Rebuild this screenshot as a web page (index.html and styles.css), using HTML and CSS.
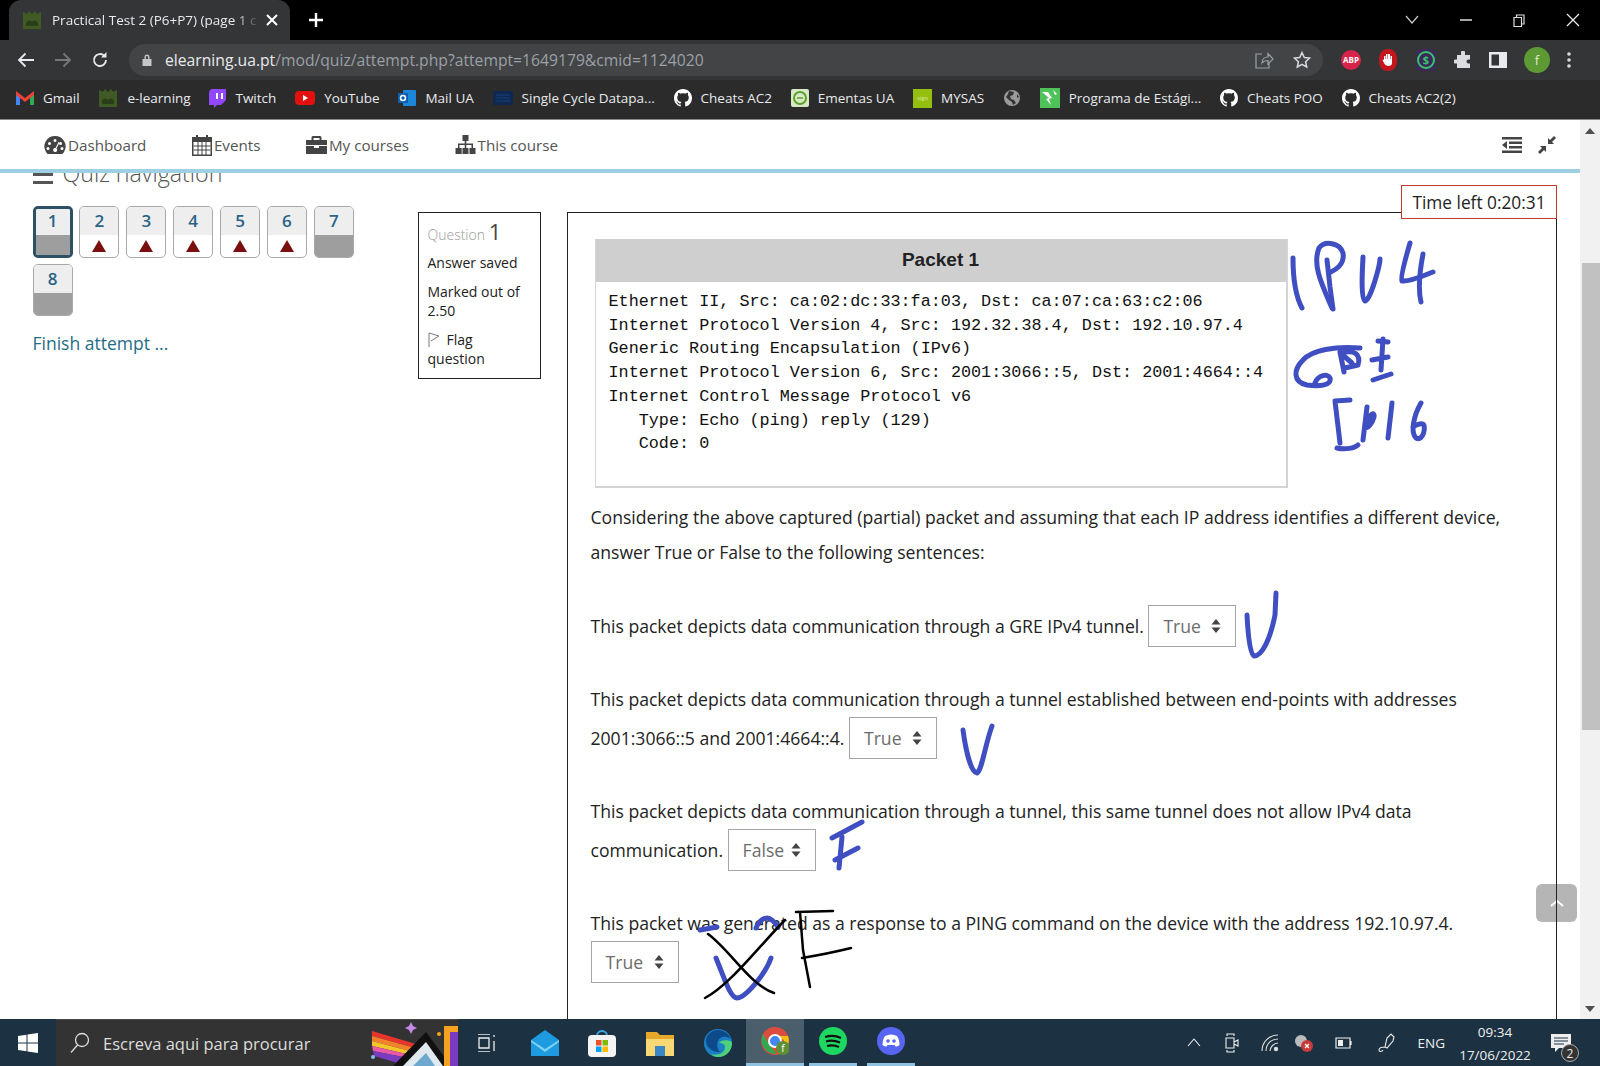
FILE: index.html
```html
<!DOCTYPE html>
<html lang="pt">
<head>
    <meta charset="UTF-8">
    <title>Practical Test 2 (P6+P7)</title>
    <link rel="stylesheet" href="styles.css">
</head>
<body>
<svg class="iconDefs" width="0" height="0">
    <symbol id="github" viewBox="0 0 16 16"><path fill="#fff" d="M8 0C3.58 0 0 3.58 0 8c0 3.54 2.29 6.53 5.47 7.59.4.07.55-.17.55-.38 0-.19-.01-.82-.01-1.49-2.01.37-2.53-.49-2.69-.94-.09-.23-.48-.94-.82-1.13-.28-.15-.68-.52-.01-.53.63-.01 1.08.58 1.23.82.72 1.21 1.87.87 2.33.66.07-.52.28-.87.51-1.07-1.78-.2-3.64-.89-3.64-3.95 0-.87.31-1.59.82-2.15-.08-.2-.36-1.02.08-2.12 0 0 .67-.21 2.2.82.64-.18 1.32-.27 2-.27.68 0 1.36.09 2 .27 1.53-1.04 2.2-.82 2.2-.82.44 1.1.16 1.92.08 2.12.51.56.82 1.27.82 2.15 0 3.07-1.87 3.75-3.65 3.95.29.25.54.73.54 1.48 0 1.07-.01 1.93-.01 2.2 0 .21.15.46.55.38A8.013 8.013 0 0016 8c0-4.42-3.58-8-8-8z"/></symbol>
    <symbol id="moodle" viewBox="0 0 20 20"><path fill="#3f5a24" d="M1 2l4 2 2-3 3 3 3-3 2 3 4-2v17H1z"/><path fill="#2a3d18" d="M4 13c2-3 4-3 6-1 2-2 4-2 6 1v3H4z"/></symbol>
    <symbol id="updown" viewBox="0 0 10 14"><path fill="#444" d="M5 0l4.5 5.5h-9zM5 14L.5 8.500h9z"/></symbol>
    <symbol id="warn" viewBox="0 0 14 12"><path fill="#7b0f0f" d="M7 0l7 12H0z"/></symbol>
</svg>

<div class="tabStrip">
    <div class="tab">
        <svg class="favicon" width="20" height="20"><use href="#moodle"/></svg>
        <span class="tabTitle">Practical Test 2 (P6+P7) (page 1 c</span>
        <svg class="tabClose" width="12" height="12" viewBox="0 0 12 12"><path d="M1 1l10 10M11 1L1 11" stroke="#fff" stroke-width="2"/></svg>
    </div>
    <svg class="newTab" width="16" height="16" viewBox="0 0 16 16"><path d="M8 1v14M1 8h14" stroke="#fff" stroke-width="2.400"/></svg>
    <div class="windowBtns">
        <svg width="14" height="10" viewBox="0 0 14 10"><path d="M1 1l6 7 6-7" fill="none" stroke="#ccc" stroke-width="1.200"/></svg>
        <svg width="12" height="2" viewBox="0 0 12 2"><path d="M0 1h12" stroke="#ddd" stroke-width="1.500"/></svg>
        <svg width="12" height="13" viewBox="0 0 12 13"><path d="M1 3.500h7.500v9H1zM3.500 3.500V1H11v9H8.500" fill="none" stroke="#ddd" stroke-width="1.200"/></svg>
        <svg width="14" height="14" viewBox="0 0 14 14"><path d="M1 1l12 12M13 1L1 13" stroke="#eee" stroke-width="1.200"/></svg>
    </div>
</div>

<div class="toolBar">
    <svg class="navBtn" width="18" height="16" viewBox="0 0 18 16"><path d="M17 8H2M8.500 1.500L2 8l6.500 6.500" fill="none" stroke="#e8eaed" stroke-width="1.800"/></svg>
    <svg class="navBtn" width="18" height="16" viewBox="0 0 18 16"><path d="M1 8h15M9.500 1.500L16 8l-6.500 6.500" fill="none" stroke="#777" stroke-width="1.800"/></svg>
    <svg class="navBtn" width="18" height="18" viewBox="0 0 18 18"><path d="M15 9a6 6 0 1 1-1.800-4.300" fill="none" stroke="#e8eaed" stroke-width="1.800"/><path d="M15.500 1v5.500H10z" fill="#e8eaed"/></svg>
    <div class="urlBar">
        <svg width="12" height="14" viewBox="0 0 12 14"><path fill="#c4c7c5" d="M1.500 6h9v7h-9zM3.500 6V4a2.500 2.500 0 0 1 5 0v2h-1.400V4a1.100 1.100 0 0 0-2.200 0v2z"/></svg>
        <span class="urlText"><b>elearning.ua.pt</b>/mod/quiz/attempt.php?attempt=1649179&amp;cmid=1124020</span>
        <svg class="urlIcon" width="20" height="18" viewBox="0 0 20 18"><path d="M8 3H2v14h13v-5M8 12c0-4 3-6 6-6V2.500L19 8l-5 5V9.500c-3 0-5 1-6 2.500z" fill="none" stroke="#9aa0a6" stroke-width="1.200"/></svg>
        <svg class="urlIcon" width="18" height="18" viewBox="0 0 18 18"><path d="M9 1.500l2.300 5 5.300.6-4 3.600 1.100 5.300L9 13.300 4.300 16l1.100-5.300-4-3.600 5.300-.6z" fill="none" stroke="#dadce0" stroke-width="1.500"/></svg>
    </div>
    <div class="extensions">
        <span class="extAbp">ABP</span>
        <svg width="20" height="22" viewBox="0 0 20 22"><path fill="#c5161d" d="M10 0c6 0 9 4 9 11s-3 11-9 11-9-4-9-11 3-11 9-11z"/><path fill="#fff" d="M6 11V7h1.500v3h.5V5h1.500v5h.5V5H12v5h.5V7H14v7c0 2-1.500 3-3.500 3S7 16 6 14l-1.500-3 1-.5z"/></svg>
        <svg width="22" height="24" viewBox="0 0 22 24"><rect x="1" y="1" width="20" height="22" rx="5" fill="#3b2a59"/><circle cx="11" cy="12" r="8" fill="none" stroke="#3ac26b" stroke-width="2"/><text class="extDollar" x="11" y="16" text-anchor="middle">$</text></svg>
        <svg width="18" height="18" viewBox="0 0 18 18"><path fill="#dadce0" d="M7 1.500a2 2 0 0 1 4 0V4h5v4.500h-1.500a2 2 0 0 0 0 4H16V17H3v-4.500H1.500a2 2 0 0 1 0-4H3V4h4z"/></svg>
        <svg width="18" height="18" viewBox="0 0 18 18"><path fill-rule="evenodd" fill="#e8eaed" d="M0 1h18v16H0zM2.500 3.500v11H10v-11z"/></svg>
        <span class="avatar">f</span>
        <svg width="4" height="16" viewBox="0 0 4 16"><circle cx="2" cy="2" r="1.800" fill="#dadce0"/><circle cx="2" cy="8" r="1.800" fill="#dadce0"/><circle cx="2" cy="14" r="1.800" fill="#dadce0"/></svg>
    </div>
</div>

<div class="bookmarks">
    <div class="bookmark"><svg width="18" height="14" viewBox="0 0 18 14"><path fill="#4285f4" d="M0 2v12h4V6z"/><path fill="#34a853" d="M18 2v12h-4V6z"/><path fill="#ea4335" d="M0 0l9 7 9-7v4L9 11 0 4z"/></svg>Gmail</div>
    <div class="bookmark"><svg width="20" height="20"><use href="#moodle"/></svg>e-learning</div>
    <div class="bookmark"><svg width="17" height="19" viewBox="0 0 17 19"><path fill="#9146ff" d="M2 0h15v11l-5 5H8l-3 3v-3H0V3z"/><path fill="#fff" d="M7 4h2v6H7zM12 4h2v6h-2z"/></svg>Twitch</div>
    <div class="bookmark"><svg width="20" height="14" viewBox="0 0 20 14"><rect width="20" height="14" rx="4" fill="#e3100f"/><path fill="#fff" d="M8 4l5 3-5 3z"/></svg>YouTube</div>
    <div class="bookmark"><svg width="18" height="18" viewBox="0 0 18 18"><rect x="5" y="1" width="13" height="16" rx="1" fill="#1c86d8"/><rect y="4" width="10" height="10" fill="#0b5fb3"/><circle cx="5" cy="9" r="2.500" fill="none" stroke="#fff" stroke-width="1.500"/></svg>Mail UA</div>
    <div class="bookmark"><svg width="20" height="14" viewBox="0 0 20 14"><rect width="20" height="14" fill="#10284f"/><path d="M3 4h14M3 7h14M3 10h14" stroke="#17407e"/></svg>Single Cycle Datapa...</div>
    <div class="bookmark"><svg width="18" height="18"><use href="#github"/></svg>Cheats AC2</div>
    <div class="bookmark"><svg width="18" height="18" viewBox="0 0 18 18"><rect width="18" height="18" rx="2" fill="#d9e8c8"/><circle cx="9" cy="9" r="6" fill="none" stroke="#5da32b" stroke-width="2"/><path d="M6 9h6" stroke="#5da32b" stroke-width="1.500"/></svg>Ementas UA</div>
    <div class="bookmark"><span class="mysasIcon">sigo</span>MYSAS</div>
    <div class="bookmark"><svg width="18" height="18" viewBox="0 0 18 18"><circle cx="9" cy="9" r="8" fill="#9a9a9a"/><path fill="#333" d="M6 2l5 1-1 3-3 1 1 3 3 1 2 3-3 2-1-3-3-2-3-3 2-3zM14 5l2 3-2 1z"/></svg></div>
    <div class="bookmark"><svg width="20" height="20" viewBox="0 0 20 20"><rect width="20" height="20" fill="#4fc25a"/><path fill="#fff" d="M2 4l7 6-3 1 5 6-2-6 3-1-4-6zM13 2l4 4-2 1z"/></svg>Programa de Estági...</div>
    <div class="bookmark"><svg width="18" height="18"><use href="#github"/></svg>Cheats POO</div>
    <div class="bookmark"><svg width="18" height="18"><use href="#github"/></svg>Cheats AC2(2)</div>
</div>

<div class="pageArea">
    <div class="pageColumn">
        <div class="navBar">
            <div class="navItem">
                <svg width="22" height="20" viewBox="0 0 22 20"><path fill="#444" fill-rule="evenodd" d="M11 1a10.500 10.500 0 0 0-9 16l1.500 2h15l1.500-2A10.500 10.500 0 0 0 11 1zM11 4a1.500 1.500 0 1 1 0 3 1.500 1.500 0 0 1 0-3zM5.500 7a1.500 1.500 0 1 1 0 3 1.500 1.500 0 0 1 0-3zM16.500 7a1.500 1.500 0 1 1 0 3 1.500 1.500 0 0 1 0-3zM4 12a1.500 1.500 0 1 1 0 3 1.500 1.500 0 0 1 0-3zM18 12a1.500 1.500 0 1 1 0 3 1.500 1.500 0 0 1 0-3zM14.500 7l1 .5-3 6a2 2 0 1 1-1-.5z"/></svg>
                Dashboard
            </div>
            <div class="navItem">
                <svg width="20" height="22" viewBox="0 0 20 22"><path fill="#444" fill-rule="evenodd" d="M0 3h4V1h2v2h8V1h2v2h4v19H0zM1.500 8v12.500h17V8z"/><path d="M1.500 12h17M1.500 16h17M6 8v13M10 8v13M14 8v13" stroke="#444"/></svg>
                Events
            </div>
            <div class="navItem">
                <svg width="21" height="18" viewBox="0 0 21 18"><path fill="#444" d="M7 0h7a1.500 1.500 0 0 1 1.500 1.500V4H21v5H0V4h5.500V1.500A1.500 1.500 0 0 1 7 0zm.500 2v2h6V2zM0 10h8v2h5v-2h8v8H0z"/></svg>
                My courses
            </div>
            <div class="navItem">
                <svg width="21" height="19" viewBox="0 0 21 19"><path fill="#444" d="M7.500 0h6v6h-2.200v2.500H18V13h2.500v6h-6v-6H16.500v-3h-5.200v3h2.200v6h-6v-6h2.200v-3H4.500v3h2.200v6H.5v-6H3V8.500h6.700V6H7.500z"/></svg>
                This course
            </div>
            <div class="navTools">
                <svg width="20" height="16" viewBox="0 0 20 16"><path fill="#444" d="M0 0h20v2.500H0zM7 4.500h13V7H7zM7 9h13v2.500H7zM0 13.500h20V16H0zM5 4v8L0 8z"/></svg>
                <svg width="18" height="18" viewBox="0 0 18 18"><path fill="#444" d="M10 8V2l2 2 4-4 2 2-4 4 2 2zM8 10v6l-2-2-4 4-2-2 4-4-2-2z"/></svg>
            </div>
        </div>
        <div class="content">
            <div class="sideBlock">
                <div class="quizNavTitle"><span class="burger"></span>Quiz navigation</div>
                <div class="quizNavGrid">
                    <div class="qnBtn qnCurrent"><span class="qnNum">1</span><span class="qnMark qnGrey"></span></div>
                    <div class="qnBtn"><span class="qnNum">2</span><span class="qnMark"><svg width="14" height="12"><use href="#warn"/></svg></span></div>
                    <div class="qnBtn"><span class="qnNum">3</span><span class="qnMark"><svg width="14" height="12"><use href="#warn"/></svg></span></div>
                    <div class="qnBtn"><span class="qnNum">4</span><span class="qnMark"><svg width="14" height="12"><use href="#warn"/></svg></span></div>
                    <div class="qnBtn"><span class="qnNum">5</span><span class="qnMark"><svg width="14" height="12"><use href="#warn"/></svg></span></div>
                    <div class="qnBtn"><span class="qnNum">6</span><span class="qnMark"><svg width="14" height="12"><use href="#warn"/></svg></span></div>
                    <div class="qnBtn"><span class="qnNum">7</span><span class="qnMark qnGrey"></span></div>
                    <div class="qnBtn"><span class="qnNum">8</span><span class="qnMark qnGrey"></span></div>
                </div>
                <div class="finishLink">Finish attempt ...</div>
            </div>
            <div class="questionInfo">
                <div class="qiTitle">Question <b>1</b></div>
                <p>Answer saved</p>
                <p>Marked out of 2.50</p>
                <p><svg class="flagIcon" width="12" height="15" viewBox="0 0 12 15"><path d="M1 15V1l10 3-8 5" fill="none" stroke="#777"/></svg>Flag question</p>
            </div>
            <div class="questionBox">
                <div class="packetFigure">
                    <div class="packetHead">Packet 1</div>
                    <pre class="packetBody">Ethernet II, Src: ca:02:dc:33:fa:03, Dst: ca:07:ca:63:c2:06
Internet Protocol Version 4, Src: 192.32.38.4, Dst: 192.10.97.4
Generic Routing Encapsulation (IPv6)
Internet Protocol Version 6, Src: 2001:3066::5, Dst: 2001:4664::4
Internet Control Message Protocol v6
   Type: Echo (ping) reply (129)
   Code: 0</pre>
                </div>
                <p class="qText qFirst">Considering the above captured (partial) packet and assuming that each IP address identifies a different device, answer True or False to the following sentences:</p>
                <p class="qText">This packet depicts data communication through a GRE IPv4 tunnel. <span class="selectBox">True<svg width="10" height="14"><use href="#updown"/></svg></span></p>
                <p class="qText">This packet depicts data communication through a tunnel established between end-points with addresses 2001:3066::5 and 2001:4664::4. <span class="selectBox">True<svg width="10" height="14"><use href="#updown"/></svg></span></p>
                <p class="qText">This packet depicts data communication through a tunnel, this same tunnel does not allow IPv4 data communication. <span class="selectBox">False<svg width="10" height="14"><use href="#updown"/></svg></span></p>
                <p class="qText">This packet was generated as a response to a PING command on the device with the address 192.10.97.4. <span class="selectBox">True<svg width="10" height="14"><use href="#updown"/></svg></span></p>
            </div>
        </div>
        <div class="timeLeft">Time left 0:20:31</div>
        <div class="toTop"><svg width="14" height="8" viewBox="0 0 14 8"><path d="M1 7l6-5 6 5" fill="none" stroke="#fff" stroke-width="2"/></svg></div>
    </div>
    <div class="scrollBar">
        <svg width="10" height="6" viewBox="0 0 10 6"><path d="M5 0l5 6H0z" fill="#505050"/></svg>
        <div class="scrollThumb"></div>
        <svg width="10" height="6" viewBox="0 0 10 6"><path d="M5 6l5-6H0z" fill="#505050"/></svg>
    </div>
</div>

<div class="taskBar">
    <div class="startBtn"><svg width="20" height="20" viewBox="0 0 20 20"><path fill="#fff" d="M0 3l8.500-1.200V9.500H0zM9.500 1.600L20 0v9.500H9.500zM0 10.500h8.500v7.700L0 17zM9.500 10.500H20V20L9.500 18.400z"/></svg></div>
    <div class="searchBox">
        <svg width="20" height="22" viewBox="0 0 20 22"><circle cx="12" cy="8" r="6.500" fill="none" stroke="#ddd" stroke-width="1.300"/><path d="M7.500 13L1 20.500" stroke="#ddd" stroke-width="1.300"/></svg>
        <span class="searchText">Escreva aqui para procurar</span>
        <svg class="searchArt" width="90" height="46" viewBox="0 0 90 46">
            <path d="M4 11L58 27v4L4 16z" fill="#e8352b"/>
            <path d="M4 16L58 31l-1 4L4 21z" fill="#f4802b"/>
            <path d="M4 21L57 35l-1 3L4 26z" fill="#f6c52b"/>
            <path d="M4 26L56 38l-1 3L5 31z" fill="#e85aa8"/>
            <path d="M5 31L55 41l-2 5H40L6 36z" fill="#7a3bc0"/>
            <path d="M25 46L58 12l25 34z" fill="#111"/>
            <path d="M35 46l23-24 17 24z" fill="#dfe9ee"/>
            <path d="M45 46l13-13 9 13z" fill="#6fa8cf"/>
            <path d="M76 46V6h14v6H82v34z" fill="#f4a21f"/>
            <path d="M82 46V12h8v34z" fill="#7a3bc0"/>
            <path d="M43 2l2 4 4 2-4 2-2 4-2-4-4-2 4-2z" fill="#c58be8"/>
            <circle cx="71" cy="14" r="2" fill="#f4a21f"/>
            <circle cx="5" cy="37" r="2" fill="#7fc4e8"/>
        </svg>
    </div>
    <div class="taskCell"><svg width="20" height="18" viewBox="0 0 20 18"><path d="M1 0h12M1 18h12M2 4h10v10H2zM17 1v2M17 7v10" fill="none" stroke="#eee" stroke-width="1.300"/></svg></div>
    <div class="taskCell"><svg width="28" height="26" viewBox="0 0 28 26"><path fill="#1e9be0" d="M0 10L14 0l14 10v16H0z"/><path fill="#7fd0f5" d="M0 10l14 9 14-9v2L14 22 0 12z"/></svg></div>
    <div class="taskCell"><svg width="28" height="28" viewBox="0 0 28 28"><path d="M9 7a5 5 0 0 1 10 0" fill="none" stroke="#3da9dc" stroke-width="2"/><rect y="6" width="28" height="22" rx="4" fill="#f4f4f4"/><rect x="8" y="11" width="5.500" height="5.500" fill="#e8512b"/><rect x="14.500" y="11" width="5.500" height="5.500" fill="#7fba00"/><rect x="8" y="17.500" width="5.500" height="5.500" fill="#00a4ef"/><rect x="14.500" y="17.500" width="5.500" height="5.500" fill="#ffb900"/></svg></div>
    <div class="taskCell"><svg width="28" height="26" viewBox="0 0 28 26"><path fill="#e8a92a" d="M0 2h11l3 3h14v21H0z"/><path fill="#f8d775" d="M0 9h28v17H0z"/><rect x="9" y="16" width="10" height="10" fill="#3a87c8"/></svg></div>
    <div class="taskCell"><svg width="28" height="28" viewBox="0 0 28 28"><circle cx="14" cy="14" r="14" fill="#1a7fc4"/><path fill="#4fd17b" d="M28 14c0 8-6 14-14 14-3 0-5-1-7-3 5 2 14 0 14-7 0-2-2-4-6-4 3-4 13-3 13 0z"/><path fill="#0c4a8a" d="M2 10C4 4 9 1 14 1c6 0 11 4 13 9-4-3-9-3-12 0-3 4-2 10 1 13-7 1-15-5-14-13z"/></svg></div>
    <div class="taskCell taskActive"><svg width="28" height="28" viewBox="0 0 28 28"><circle cx="14" cy="14" r="14" fill="#dd4b3e"/><path fill="#f4c20d" d="M14 9h13a14 14 0 0 1-9 18l5-14z"/><path fill="#31a852" d="M2 7l8 13 6 7A14 14 0 0 1 2 7z"/><circle cx="14" cy="14" r="6" fill="#4285f4" stroke="#fff" stroke-width="2"/><circle cx="22" cy="21" r="7" fill="#5e8f35"/><text class="chromeBadge" x="22" y="25" text-anchor="middle">f</text></svg></div>
    <div class="taskCell taskOpen"><svg width="28" height="28" viewBox="0 0 28 28"><circle cx="14" cy="14" r="14" fill="#1ed760"/><path d="M6 10c6-2 11-1.500 16 1M7 14.500c5-1.500 9-1 14 1M8 19c4-1 8-.8 12 1" fill="none" stroke="#111" stroke-width="2.200"/></svg></div>
    <div class="taskCell taskOpen"><svg width="28" height="28" viewBox="0 0 28 28"><circle cx="14" cy="14" r="14" fill="#5865f2"/><path fill="#fff" d="M8 9c4-2 8-2 12 0 2 3 2.500 6 2.500 9-1.500 1-3 1.500-4 1.500l-1-1.500H10.500l-1 1.500c-1 0-2.500-.5-4-1.500 0-3 .5-6 2.500-9z"/><circle cx="11" cy="14" r="1.800" fill="#5865f2"/><circle cx="17" cy="14" r="1.800" fill="#5865f2"/></svg></div>
    <div class="tray">
        <svg width="14" height="9" viewBox="0 0 14 9"><path d="M1 8l6-7 6 7" fill="none" stroke="#eee" stroke-width="1.100"/></svg>
        <svg width="14" height="20" viewBox="0 0 14 20"><path d="M2 3V1h7v2M2 17v2h7v-2M1 5h8v10H1zM9 9l4-2v6l-4-2" fill="none" stroke="#eee" stroke-width="1.100"/></svg>
        <svg class="trayWifi" width="18" height="18" viewBox="0 0 18 18"><path d="M1 17C1 8 8 1 17 1M5 17C5 10 10 5 17 5M9 17c0-4 4-8 8-8" fill="none" stroke="#ddd" stroke-width="1.100"/><circle cx="15" cy="15" r="2.200" fill="#ddd"/></svg>
        <svg class="trayCloud" width="20" height="20" viewBox="0 0 20 20"><circle cx="7" cy="8" r="6" fill="#bbb"/><circle cx="13" cy="13" r="6" fill="#c83a3a"/><path d="M11 11l4 4M15 11l-4 4" stroke="#fff" stroke-width="1.200"/></svg>
        <svg class="trayBattery" width="18" height="12" viewBox="0 0 18 12"><path d="M1 1h14v10H1zM16 4v4" fill="none" stroke="#eee" stroke-width="1.200"/><rect x="3" y="3" width="5" height="6" fill="#eee"/></svg>
        <svg width="20" height="20" viewBox="0 0 20 20"><path d="M8 14l2-9 4-4 3 3-1 4-6 7zM8 14c-4 0-6 1-6 3s3 2 4 0" fill="none" stroke="#eee" stroke-width="1.100"/></svg>
        <span class="trayLang">ENG</span>
        <div class="trayClock">09:34<br>17/06/2022</div>
        <div class="trayNotif">
            <svg width="20" height="18" viewBox="0 0 20 18"><path fill="#eee" d="M0 0h20v14H8l-4 4v-4H0z"/><path d="M3 4h14M3 7h14M3 10h10" stroke="#1c3140"/></svg>
            <span class="notifCount">2</span>
        </div>
    </div>
</div>

<svg class="inkLayer" width="1600" height="1066" viewBox="0 0 1600 1066">
    <g class="inkBlue">
        <path d="M1293 258C1293 275 1295 295 1302 308"/>
        <path d="M1327 260L1330 287L1333 309"/>
        <path d="M1332 308C1322 285 1312 265 1319 248C1325 240 1340 243 1343 253C1345 265 1335 270 1329 273"/>
        <path d="M1363 257C1362 275 1361 298 1365 301C1370 302 1380 265 1380 259"/>
        <path d="M1410 243C1405 260 1400 278 1402 281C1410 282 1425 275 1433 272"/>
        <path d="M1423 254C1419 275 1418 290 1421 302"/>
        <path d="M1360 348C1335 346 1312 350 1303 360C1293 370 1293 382 1307 385C1320 387 1332 385 1330 378C1328 373 1318 375 1315 383"/>
        <path d="M1340 352L1344 372M1342 353C1355 349 1361 355 1358 365L1345 368M1345 357L1352 363"/>
        <path d="M1383 339L1381 370M1372 360L1388 357M1373 380L1391 374M1378 341L1388 342"/>
        <path d="M1350 400L1335 401L1340 443M1337 448C1345 450 1355 448 1358 445"/>
        <path d="M1367 407L1363 440M1366 425C1370 412 1375 412 1374 417C1372 424 1368 428 1365 428"/>
        <path d="M1392 403L1388 438"/>
        <path d="M1421 403C1414 415 1410 432 1416 438C1424 442 1426 425 1423 424C1420 423 1416 425 1413 427"/>
        <path d="M1247 615C1248 635 1250 655 1254 656C1262 656 1270 640 1275 615L1276 593"/>
        <path d="M963 730C965 745 970 772 977 773C982 770 985 745 992 726"/>
        <path d="M832 838L862 822M842 837L839 868M835 860L858 848"/>
        <path d="M716 958C725 980 730 997 737 998C745 998 765 975 771 958"/>
        <path d="M756 928C762 915 770 915 778 927M700 930L717 927"/>
    </g>
    <g class="inkBlack">
        <path d="M708 934C730 950 750 985 774 993"/>
        <path d="M705 998C730 985 760 945 785 920"/>
        <path d="M796 912L833 911M800 912L803 950L810 987"/>
        <path d="M802 958C820 955 835 952 851 948"/>
    </g>
</svg>
</body>
</html>
```
FILE: styles.css
```css
html,body{
    margin: 0;
    padding: 0;
    width: 1600px;
    height: 1066px;
    overflow: hidden;
    background: #fff;
    font-family: "Open Sans", "Liberation Sans", sans-serif;
}
body{
    display: flex;
    flex-direction: column;
    position: relative;
}
svg{
    flex: none;
}
.iconDefs{
    position: absolute;
}
p{
    margin: 0;
}

/* browser chrome */
.tabStrip{
    height: 40px;
    background: #000;
    display: flex;
    align-items: flex-end;
    padding-left: 9px;
}
.tab{
    width: 281px;
    height: 40px;
    box-sizing: border-box;
    background: #343537;
    border-radius: 12px 12px 0 0;
    display: flex;
    align-items: center;
    padding: 0 12px 0 13px;
    color: #e8eaed;
    font-size: 13.500px;
}
.tabTitle{
    flex: 1;
    margin-left: 10px;
    white-space: nowrap;
    -webkit-mask-image: linear-gradient(to right, #000 88%, transparent);
    mask-image: linear-gradient(to right, #000 88%, transparent);
}
.tabClose{
    margin-left: 6px;
}
.newTab{
    margin: 0 0 12px 18px;
}
.windowBtns{
    margin-left: auto;
    height: 40px;
    display: flex;
    align-items: center;
    gap: 41px;
    padding-right: 20px;
}
.toolBar{
    height: 40px;
    background: #343537;
    display: flex;
    align-items: center;
    padding-left: 17px;
    gap: 19px;
}
.urlBar{
    width: 1194px;
    height: 32px;
    margin-left: 1px;
    box-sizing: border-box;
    background: #434446;
    border-radius: 16px;
    display: flex;
    align-items: center;
    padding: 0 12px 0 12px;
    gap: 12px;
}
.urlText{
    flex: 1;
    color: #9aa0a6;
    font-size: 15.700px;
    white-space: nowrap;
}
.urlText b{
    color: #e8eaed;
    font-weight: 400;
}
.urlIcon{
    margin-left: 7px;
}
.extensions{
    display: flex;
    align-items: center;
    gap: 17px;
    margin-left: -1px;
}
.extAbp{
    width: 20px;
    height: 20px;
    line-height: 20px;
    border-radius: 50%;
    background: #d8234a;
    color: #fff;
    font-size: 8px;
    font-weight: 700;
    text-align: center;
}
.extDollar{
    font-size: 11px;
    font-weight: 700;
    fill: #3ac26b;
}
.chromeBadge{
    font-size: 10px;
    fill: #fff;
}
.avatar{
    width: 26px;
    height: 26px;
    line-height: 26px;
    border-radius: 50%;
    background: #5e9a33;
    color: #dfeccf;
    font-size: 13px;
    text-align: center;
}
.bookmarks{
    height: 36px;
    padding: 0 0 3px 16px;
    background: #2b2b2c;
    border-bottom: 1px solid #8a8a8a;
    display: flex;
    align-items: center;
    gap: 18.800px;
}
.bookmark{
    display: flex;
    align-items: center;
    gap: 9px;
    color: #e8eaed;
    font-size: 13.500px;
    white-space: nowrap;
}
.mysasIcon{
    width: 19px;
    height: 19px;
    line-height: 19px;
    background: #94bf0f;
    color: #dbe9a8;
    font-size: 6px;
    text-align: center;
}

/* moodle page */
.pageArea{
    flex: 1;
    min-height: 0;
    display: flex;
}
.pageColumn{
    flex: 1;
    min-width: 0;
    display: flex;
    flex-direction: column;
    position: relative;
    overflow: hidden;
}
.navBar{
    height: 49px;
    flex: none;
    border-bottom: 4px solid #9fcfe3;
    display: flex;
    align-items: center;
    padding: 0 24px 0 44px;
    gap: 45.500px;
    color: #555;
    font-size: 15.200px;
    background: #fff;
    position: relative;
    z-index: 2;
}
.navItem{
    display: flex;
    align-items: center;
    gap: 2px;
}
.navTools{
    margin-left: auto;
    display: flex;
    align-items: center;
    gap: 16px;
}
.content{
    flex: 1;
    min-height: 0;
    display: flex;
    align-items: flex-start;
    padding-left: 32.500px;
    overflow: hidden;
}
.sideBlock{
    width: 385px;
    flex: none;
}
.quizNavTitle{
    display: flex;
    align-items: center;
    height: 30px;
    margin: -15px 0 18px;
    font-size: 23.200px;
    font-weight: 300;
    color: #555;
    white-space: nowrap;
}
.burger{
    width: 20px;
    height: 11px;
    margin: 0 10px 0 0;
    border-top: 3px solid #555;
    border-bottom: 3px solid #555;
    box-sizing: border-box;
    position: relative;
    top: 5px;
}
.quizNavGrid{
    display: grid;
    grid-template-columns: repeat(7, 40px);
    grid-auto-rows: 52px;
    gap: 6px 6.900px;
}
.qnBtn{
    border: 1px solid #a9a9a9;
    border-radius: 5px;
    overflow: hidden;
    display: flex;
    flex-direction: column;
    box-sizing: border-box;
    background: #fff;
}
.qnCurrent{
    border: 3px solid #2c5167;
}
.qnNum{
    height: 28px;
    flex: none;
    line-height: 28px;
    background: #eee;
    color: #2a6386;
    font-size: 17px;
    font-weight: 600;
    text-align: center;
}
.qnCurrent .qnNum{
    height: 26px;
    line-height: 24px;
}
.qnMark{
    flex: 1;
    display: flex;
    align-items: center;
    justify-content: center;
}
.qnGrey{
    background: #9e9e9e;
}
.finishLink{
    margin-top: 15px;
    color: #1f6c86;
    font-size: 17.500px;
    line-height: 25px;
}
.questionInfo{
    width: 123px;
    flex: none;
    box-sizing: border-box;
    margin-top: 39px;
    border: 1.500px solid #222;
    padding: 8px 10px 9px 9px;
    color: #222;
    font-size: 14px;
    line-height: 19.500px;
}
.questionInfo p{
    margin-top: 9px;
}
.questionInfo .qiTitle + p{
    margin-top: 8px;
}
.qiTitle{
    color: #999;
    font-size: 14px;
    font-weight: 300;
    line-height: 21px;
}
.qiTitle b{
    color: #444;
    font-size: 22px;
    font-weight: 500;
}
.flagIcon{
    margin-right: 7px;
    vertical-align: -2px;
}
.questionBox{
    width: 990px;
    flex: none;
    box-sizing: border-box;
    margin: 39px 0 0 26px;
    height: 1000px;
    border: 1.500px solid #222;
    padding: 26px 26px 0 23px;
    color: #222;
    font-size: 17.600px;
    position: relative;
    z-index: 1;
}
.packetFigure{
    width: 693px;
    height: 249px;
    box-sizing: border-box;
    margin-left: 4px;
    border: 1px solid #e4e4e4;
    border-width: 0 2px 2px 1px;
    border-color: #d4d4d4;
}
.packetHead{
    height: 43px;
    line-height: 41px;
    background: #cfcfcf;
    color: #222;
    font-family: "Liberation Sans", sans-serif;
    font-size: 19px;
    font-weight: 700;
    text-align: center;
}
.packetBody{
    margin: 0;
    padding: 8px 0 0 13px;
    font-family: "Liberation Mono", monospace;
    font-size: 16.800px;
    line-height: 23.700px;
    color: #111;
}
.qText{
    margin-top: 35px;
    line-height: 35px;
}
.qFirst{
    margin-top: 12px;
}
.selectBox{
    display: inline-flex;
    align-items: center;
    justify-content: space-between;
    box-sizing: border-box;
    height: 42px;
    min-width: 88px;
    padding: 0 14px;
    gap: 6px;
    border: 1px solid #a5a5a5;
    color: #6c6c6c;
    vertical-align: baseline;
}
.timeLeft{
    position: absolute;
    top: 65px;
    left: 1401px;
    width: 156px;
    height: 34px;
    line-height: 33px;
    box-sizing: border-box;
    border: 1px solid #c0392b;
    background: #fff;
    color: #222;
    font-size: 17.300px;
    text-align: center;
    z-index: 3;
}
.toTop{
    position: absolute;
    top: 764px;
    left: 1536px;
    width: 41px;
    height: 38px;
    border-radius: 6px;
    background: #b5b5b5;
    display: flex;
    align-items: center;
    justify-content: center;
}
.scrollBar{
    width: 20px;
    flex: none;
    background: #f1f1f1;
    display: flex;
    flex-direction: column;
    align-items: center;
    padding: 8px 0 7px;
    box-sizing: border-box;
    position: relative;
}
.scrollThumb{
    position: absolute;
    top: 143px;
    left: 2px;
    width: 18px;
    height: 467px;
    background: #c1c1c1;
}
.scrollBar svg:last-child{
    margin-top: auto;
}

/* windows taskbar */
.taskBar{
    height: 47px;
    flex: none;
    background: #1c3242;
    display: flex;
    align-items: center;
    position: relative;
    z-index: 3;
}
.startBtn{
    width: 56px;
    display: flex;
    justify-content: center;
}
.searchBox{
    width: 402px;
    height: 47px;
    box-sizing: border-box;
    background: #333;
    border-top: 1px solid #4a4a4a;
    display: flex;
    align-items: center;
    padding-left: 14px;
    color: #ddd;
    font-size: 16.500px;
    position: relative;
    overflow: hidden;
}
.searchText{
    margin-left: 13px;
    white-space: nowrap;
}
.searchArt{
    position: absolute;
    right: 0;
    bottom: 0;
}
.taskCell{
    width: 57.700px;
    height: 47px;
    flex: none;
    box-sizing: border-box;
    display: flex;
    align-items: center;
    justify-content: center;
}
.taskActive{
    background: #4a5e6b;
    border-bottom: 3px solid #8fc2e0;
}
.taskOpen{
    border-bottom: 3px solid #1c3242;
    position: relative;
}
.taskOpen::after{
    content: "";
    position: absolute;
    left: 5px;
    right: 5px;
    bottom: -3px;
    height: 3px;
    background: #8fc2e0;
}
.tray{
    margin-left: auto;
    display: flex;
    align-items: center;
    gap: 24px;
    padding-right: 29px;
    color: #eee;
}
.trayWifi{
    margin-left: -2px;
}
.trayCloud{
    margin-left: -9px;
}
.trayBattery{
    margin-left: -3px;
}
.trayLang{
    font-size: 13.500px;
    margin-left: -3px;
}
.trayClock{
    width: 76px;
    margin-left: -12px;
    padding-top: 2px;
    text-align: center;
    font-size: 13.500px;
    line-height: 23px;
}
.trayNotif{
    position: relative;
    margin-left: -6px;
    display: flex;
}
.notifCount{
    position: absolute;
    right: -8px;
    bottom: -10px;
    width: 18px;
    height: 18px;
    line-height: 17px;
    box-sizing: border-box;
    border: 1px solid #aaa;
    border-radius: 50%;
    background: #333;
    color: #eee;
    font-size: 12px;
    text-align: center;
}

/* pen strokes drawn on the screenshot */
.inkLayer{
    position: absolute;
    top: 0;
    left: 0;
    pointer-events: none;
    z-index: 2;
}
.inkBlue path{
    fill: none;
    stroke: #3f4fc2;
    stroke-width: 5;
    stroke-linecap: round;
    stroke-linejoin: round;
}
.inkBlack path{
    fill: none;
    stroke: #000;
    stroke-width: 2.500;
    stroke-linecap: round;
    stroke-linejoin: round;
}
```
